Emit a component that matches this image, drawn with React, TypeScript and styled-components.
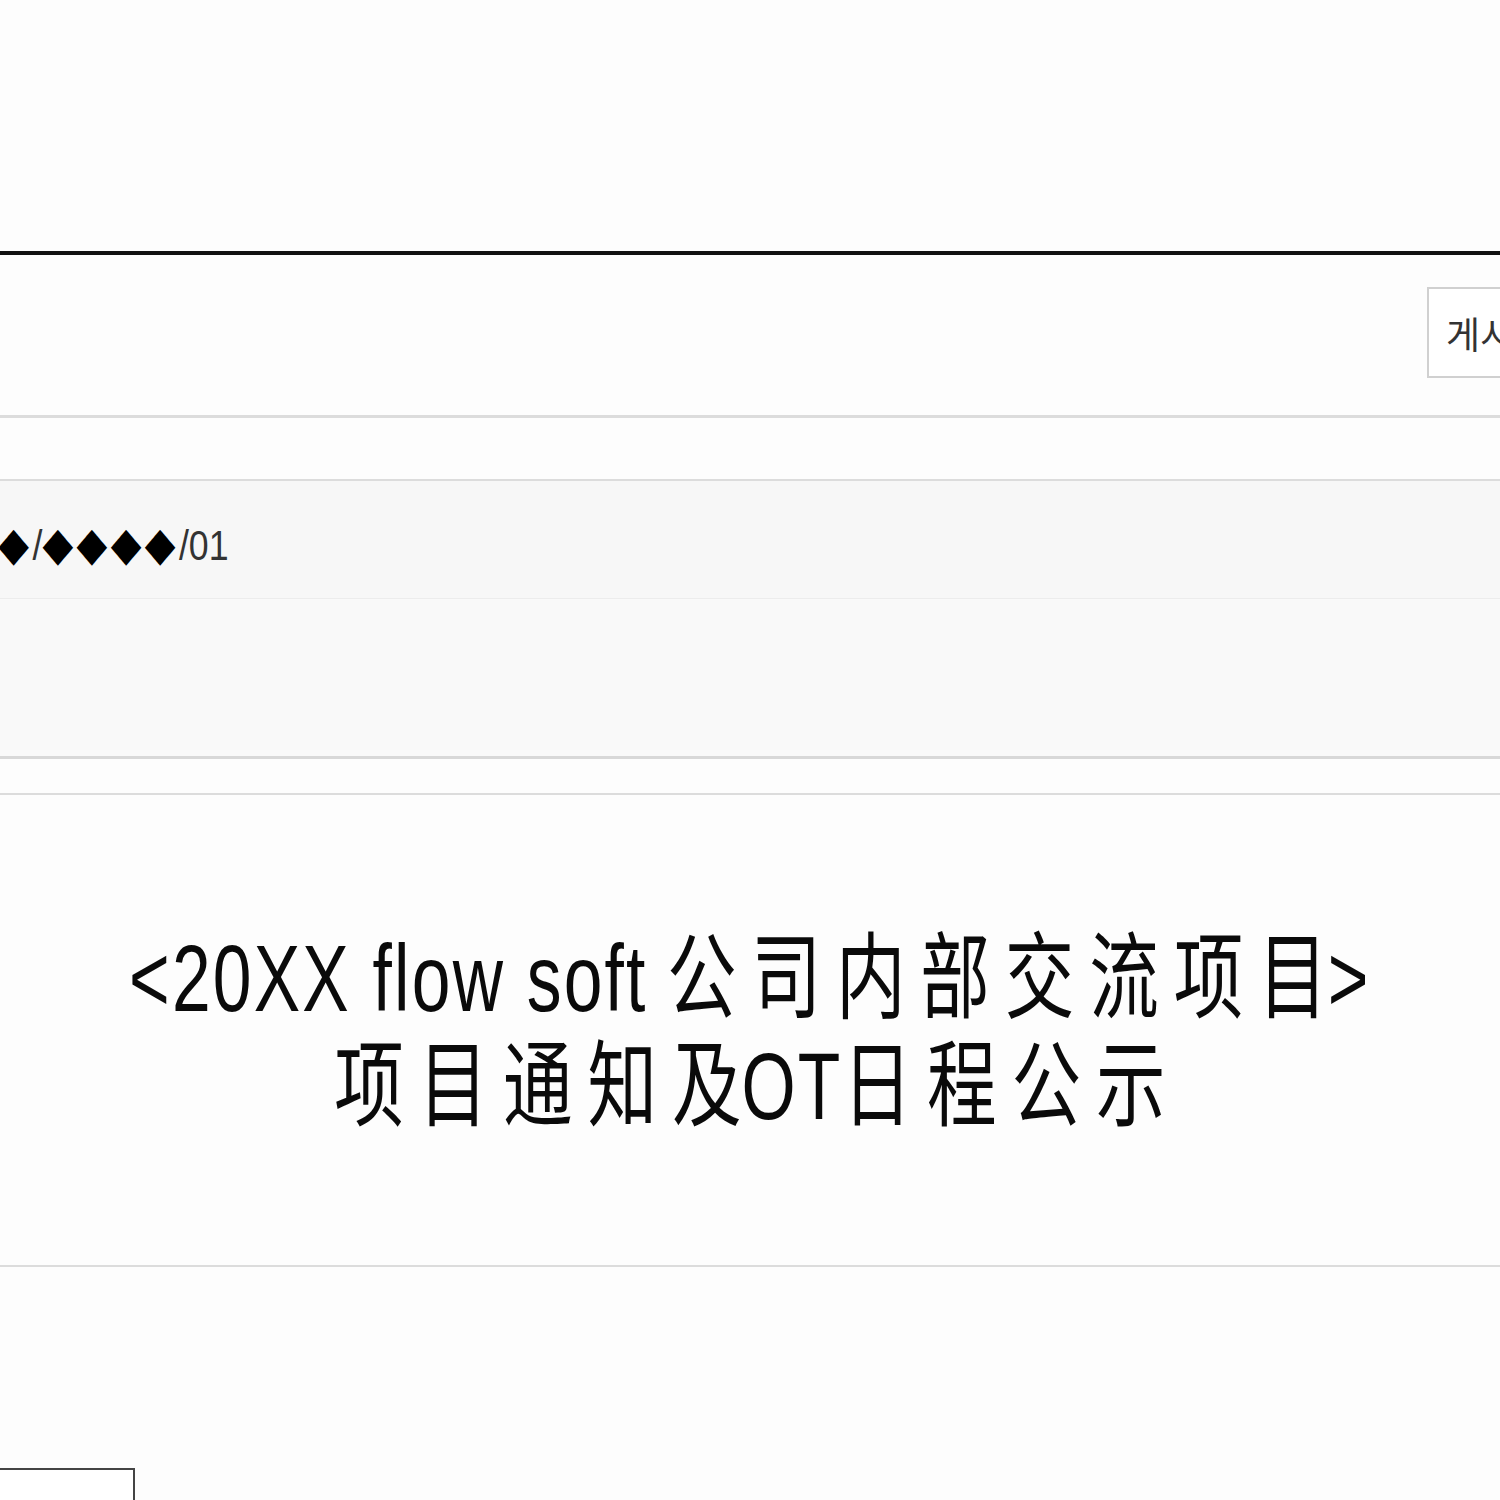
import React from "react";
import styled, { createGlobalStyle } from "styled-components";

const GlobalStyle = createGlobalStyle`
    html, body {
        margin: 0;
        padding: 0;
        background: #fdfdfd;
        overflow: hidden;
    }
    body {
        font-family: "Liberation Sans", "Noto Sans CJK KR", "Noto Sans CJK SC", sans-serif;
        color: #111;
    }
`;

const App = () => {
    return (
        <Page>
            <GlobalStyle />
            <Board>
                <Header>
                    <ListButton>게시판 목록</ListButton>
                </Header>
                <InfoTable>
                    <InfoRow>
                        <Path>
                            <Diamonds>◆◆◆◆</Diamonds>/<Diamonds>◆◆◆◆</Diamonds>/01
                        </Path>
                    </InfoRow>
                    <InfoRow tall />
                </InfoTable>
                <Content>
                    <Title>
                        <TitleLine>
                            <Latin>{"<20XX flow soft"}</Latin> <Han>公 司 内 部 交 流 项 目</Han>
                            <Latin>{">"}</Latin>
                        </TitleLine>
                        <TitleLine>
                            <Han>项 目 通 知 及</Han>
                            <Latin>OT</Latin>
                            <Han>日 程 公 示</Han>
                        </TitleLine>
                    </Title>
                </Content>
                <Footer>
                    <BackButton />
                </Footer>
            </Board>
        </Page>
    );
};

const Page = styled.div`
    width: 1500px;
    height: 1500px;
    overflow: hidden;
    padding-top: 251px;
    box-sizing: border-box;
`;

const Board = styled.div`
    border-top: 4px solid #111;
`;

const Header = styled.div`
    height: 160px;
    display: flex;
    justify-content: flex-end;
    align-items: center;
    border-bottom: 3px solid #dcdcdc;
`;

const ListButton = styled.button`
    flex: none;
    width: 240px;
    height: 91px;
    margin: 0 -167px 5px 0;
    padding: 0 17px;
    text-align: left;
    background: #fff;
    border: 2px solid #d0d0d0;
    font-family: "Noto Sans CJK KR", sans-serif;
    font-size: 37px;
    color: #333;
    white-space: nowrap;
`;

const InfoTable = styled.div`
    margin-top: 61px;
    border-top: 2px solid #dcdcdc;
    border-bottom: 3px solid #d8d8d8;
`;

const InfoRow = styled.div<{ tall?: boolean }>`
    height: ${(p) => (p.tall ? "157px" : "117px")};
    background: ${(p) => (p.tall ? "#f9f9f9" : "#f7f7f7")};
    border-bottom: ${(p) => (p.tall ? "none" : "1px solid #ececec")};
    display: flex;
    align-items: center;
    overflow: hidden;
`;

const Path = styled.div`
    flex: none;
    margin: 8px 0 0 -104px;
    font-size: 42px;
    color: #333;
    white-space: nowrap;
    transform: scaleX(0.85);
    transform-origin: left center;
`;

const Diamonds = styled.span`
    color: #000;
    font-family: "DejaVu Sans", sans-serif;
    font-size: 47px;
    letter-spacing: 4px;
`;

const Content = styled.div`
    margin-top: 34px;
    height: 470px;
    border-top: 2px solid #dcdcdc;
    border-bottom: 2px solid #dcdcdc;
    display: flex;
    justify-content: center;
    align-items: center;
    overflow: hidden;
`;

const Title = styled.div`
    display: flex;
    flex-direction: column;
    align-items: center;
    margin-top: 6px;
    transform: scaleX(0.74);
`;

const TitleLine = styled.div`
    font-family: "Liberation Sans", "Noto Sans CJK SC", sans-serif;
    font-size: 94px;
    line-height: 108px;
    color: #0a0a0a;
    white-space: nowrap;
`;

const Latin = styled.span`
    letter-spacing: 3px;
`;

const Han = styled.span`
    word-spacing: -6px;
`;

const Footer = styled.div`
    padding-top: 201px;
`;

const BackButton = styled.div`
    width: 160px;
    height: 80px;
    margin-left: -29px;
    border: 2px solid #444;
    background: #fff;
`;

export default App;
